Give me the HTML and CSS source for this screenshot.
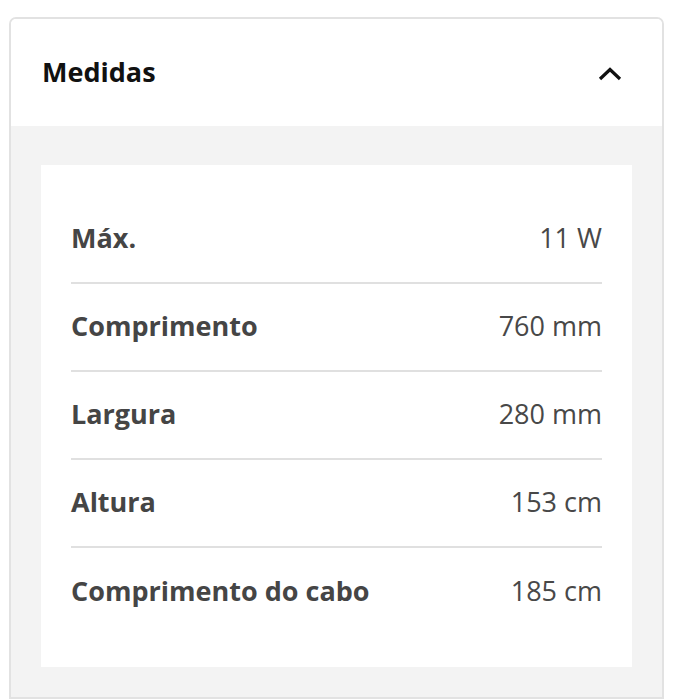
FILE: index.html
```html
<!DOCTYPE html>
<html lang="pt">

<head>
  <meta charset="UTF-8">
  <meta name="viewport" content="width=device-width, initial-scale=1.0">
  <title>Medidas</title>
  <link rel="stylesheet" href="styles.css">
</head>

<body>
  <div class="page">
    <section class="accordion">
      <div class="accordion-header">
        <h2 class="accordion-title">Medidas</h2>
        <svg class="chevron" width="24" height="14" viewBox="0 0 24 14">
          <path d="M2 12 L12 2.5 L22 12" fill="none" stroke="#111" stroke-width="3.2" />
        </svg>
      </div>
      <div class="accordion-body">
        <div class="spec-panel">
          <div class="spec-row">
            <span class="spec-label">Máx.</span>
            <span class="spec-value">11 W</span>
          </div>
          <div class="spec-row">
            <span class="spec-label">Comprimento</span>
            <span class="spec-value">760 mm</span>
          </div>
          <div class="spec-row">
            <span class="spec-label">Largura</span>
            <span class="spec-value">280 mm</span>
          </div>
          <div class="spec-row">
            <span class="spec-label">Altura</span>
            <span class="spec-value">153 cm</span>
          </div>
          <div class="spec-row">
            <span class="spec-label">Comprimento do cabo</span>
            <span class="spec-value">185 cm</span>
          </div>
        </div>
      </div>
    </section>
  </div>
</body>

</html>
```

FILE: styles.css
```css
* {
  box-sizing: border-box;
  font-family: "Open Sans", "Noto Sans", Arial, sans-serif;
}

body {
  margin: 0;
  background: #fff;
}

.page {
  padding: 17px 17px 0 9px;
}

.accordion {
  border: 2px solid #e2e2e2;
  border-radius: 7px 7px 0 0;
  overflow: hidden;
}

.accordion-header {
  height: 107px;
  padding: 0 40px 0 31px;
  display: flex;
  align-items: center;
  justify-content: space-between;
  background: #fff;
}

.accordion-title {
  margin: 0 0 2px;
  font-size: 27px;
  font-weight: 700;
  color: #111;
}

.chevron {
  margin-top: 2px;
}

.accordion-body {
  background: #f3f3f3;
  padding: 39px 30px 30px;
}

.spec-panel {
  background: #fff;
  padding: 31px 30px 31px;
}

.spec-row {
  height: 88px;
  padding-bottom: 4px;
  display: flex;
  align-items: center;
  justify-content: space-between;
  border-bottom: 2px solid #e0e0e0;
  font-size: 27px;
}

.spec-row:last-child {
  border-bottom: none;
}

.spec-label {
  font-weight: 700;
  color: #454545;
}

.spec-value {
  color: #484848;
}
```
